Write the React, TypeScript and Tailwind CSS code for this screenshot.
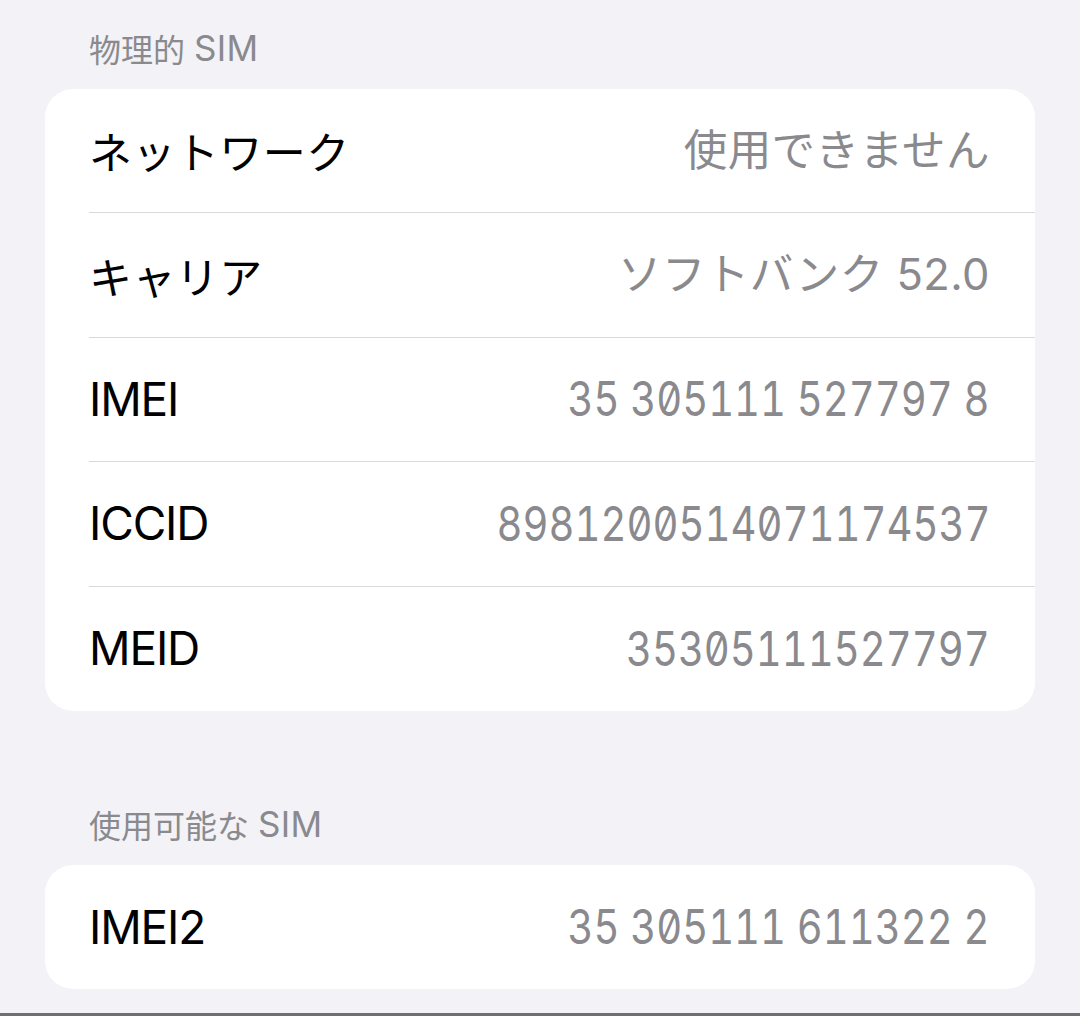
import React from 'react';

interface Row {
  label: string;
  value: string;
  jpLabel?: boolean;
  jpValue?: boolean;
}

const physicalRows: Row[] = [
  { label: 'ネットワーク', value: '使用できません', jpLabel: true, jpValue: true },
  { label: 'キャリア', value: 'ソフトバンク 52.0', jpLabel: true, jpValue: true },
  { label: 'IMEI', value: '35 305111 527797 8' },
  { label: 'ICCID', value: '8981200514071174537' },
  { label: 'MEID', value: '35305111527797' },
];

const availableRows: Row[] = [{ label: 'IMEI2', value: '35 305111 611322 2' }];

const Section: React.FC<{ title: string; rows: Row[] }> = ({ title, rows }) => (
  <section>
    {/* Tiêu đề section: phần tiếng Nhật + "SIM" */}
    <div className="h-[40px] flex items-center pl-[44px] mb-[21px] text-[#8a8a8e]">
      <span className="text-[32px] font-['Noto_Sans_CJK_JP',sans-serif]">{title}</span>
      <span className="ml-[9px] text-[35px] font-['Inter',sans-serif] tracking-[0.01em]">SIM</span>
    </div>
    <div className="bg-white rounded-[28px] overflow-hidden">
      {rows.map((row, i) => (
        <div key={row.label} className="pl-[44px]">
          <div
            className={
              'h-[124.4px] flex items-center justify-between pr-[45px] ' +
              (i < rows.length - 1 ? 'border-b border-[#d9d9dd]' : '')
            }
          >
            <span
              className={
                row.jpLabel
                  ? "text-[43px] text-black font-['Noto_Sans_CJK_JP',sans-serif] tracking-[0.01em]"
                  : "text-[46px] text-black font-['Inter',sans-serif] tracking-[-0.025em]"
              }
            >
              {row.label}
            </span>
            {row.jpValue ? (
              <span className="text-[43.5px] text-[#8a8a8e] font-['Inter','Noto_Sans_CJK_JP',sans-serif] tracking-[0.01em]">
                {row.value}
              </span>
            ) : (
              <span className="inline-block origin-right scale-x-[0.835] text-[48px] text-[#8a8a8e] font-['Inter',sans-serif] [font-feature-settings:'tnum','zero'] whitespace-nowrap">
                {row.value}
              </span>
            )}
          </div>
        </div>
      ))}
    </div>
  </section>
);

export default function App() {
  return (
    <div className="w-[1080px] h-[1016px] bg-[#f2f2f7] flex flex-col">
      <div className="flex-1 px-[45px] pt-[28px]">
        <Section title="物理的" rows={physicalRows} />
        <div className="h-[93px]" />
        <Section title="使用可能な" rows={availableRows} />
      </div>
      <div className="h-[3px] bg-[#6e6e73]" />
    </div>
  );
}
